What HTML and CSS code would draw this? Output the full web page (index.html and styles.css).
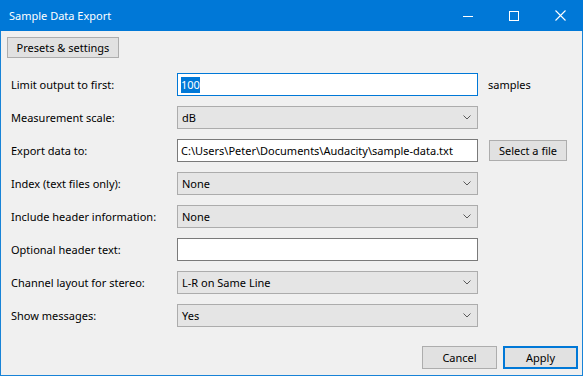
FILE: index.html
```html
<!DOCTYPE html>
<html>
<head>
<meta charset="utf-8">
<link rel="stylesheet" href="styles.css">
</head>
<body>
<div class="window">
  <div class="titlebar">
    <span class="title">Sample Data Export</span>
    <div class="controls">
      <div class="ctl"><svg width="10" height="10" viewBox="0 0 10 10"><path d="M0 5.5H10" stroke="#fff" stroke-width="1"/></svg></div>
      <div class="ctl"><svg width="10" height="10" viewBox="0 0 10 10"><rect x="0.5" y="0.5" width="9" height="9" fill="none" stroke="#fff" stroke-width="1"/></svg></div>
      <div class="ctl"><svg width="11" height="11" viewBox="0 0 11 11"><path d="M0.5 0.5L10.5 10.5M10.5 0.5L0.5 10.5" stroke="#fff" stroke-width="1.1"/></svg></div>
    </div>
  </div>
  <div class="content">
    <div class="toprow"><div class="btn presets">Presets &amp; settings</div></div>
    <div class="form">
      <div class="label">Limit output to first:</div>
      <div class="input focused"><span class="sel">100</span></div>
      <div class="extra text">samples</div>

      <div class="label">Measurement scale:</div>
      <div class="combo"><span>dB</span><svg class="chev" width="8" height="5" viewBox="0 0 8 5"><path d="M0.5 0.5L4 4L7.5 0.5" fill="none" stroke="#5a5a5a" stroke-width="1"/></svg></div>
      <div class="extra"></div>

      <div class="label">Export data to:</div>
      <div class="input">C:\Users\Peter\Documents\Audacity\sample-data.txt</div>
      <div class="extra"><div class="btn file">Select a file</div></div>

      <div class="label">Index (text files only):</div>
      <div class="combo"><span>None</span><svg class="chev" width="8" height="5" viewBox="0 0 8 5"><path d="M0.5 0.5L4 4L7.5 0.5" fill="none" stroke="#5a5a5a" stroke-width="1"/></svg></div>
      <div class="extra"></div>

      <div class="label">Include header information:</div>
      <div class="combo"><span>None</span><svg class="chev" width="8" height="5" viewBox="0 0 8 5"><path d="M0.5 0.5L4 4L7.5 0.5" fill="none" stroke="#5a5a5a" stroke-width="1"/></svg></div>
      <div class="extra"></div>

      <div class="label">Optional header text:</div>
      <div class="input"></div>
      <div class="extra"></div>

      <div class="label">Channel layout for stereo:</div>
      <div class="combo"><span>L-R on Same Line</span><svg class="chev" width="8" height="5" viewBox="0 0 8 5"><path d="M0.5 0.5L4 4L7.5 0.5" fill="none" stroke="#5a5a5a" stroke-width="1"/></svg></div>
      <div class="extra"></div>

      <div class="label">Show messages:</div>
      <div class="combo"><span>Yes</span><svg class="chev" width="8" height="5" viewBox="0 0 8 5"><path d="M0.5 0.5L4 4L7.5 0.5" fill="none" stroke="#5a5a5a" stroke-width="1"/></svg></div>
      <div class="extra"></div>
    </div>
    <div class="footer">
      <div class="btn action">Cancel</div>
      <div class="btn action default">Apply</div>
    </div>
  </div>
</div>
</body>
</html>
```

FILE: styles.css
```css
* { box-sizing: border-box; }
html, body { margin: 0; padding: 0; }
body {
  width: 583px;
  height: 376px;
  font-family: "Noto Sans", "DejaVu Sans", sans-serif;
  font-size: 11px;
  color: #000;
  background: #f0f0f0;
}
.window {
  width: 583px;
  height: 376px;
  border: 1px solid #1883d7;
  border-top: none;
  background: #f0f0f0;
  display: flex;
  flex-direction: column;
}
.titlebar {
  height: 31px;
  margin: 0 -1px;
  background: #0078d7;
  display: flex;
  align-items: center;
  justify-content: space-between;
  flex-shrink: 0;
}
.title {
  color: #fff;
  padding-left: 9px;
  font-size: 11px;
  line-height: 1;
  margin-top: -1px;
}
.controls { display: flex; height: 100%; }
.ctl {
  width: 46px;
  height: 100%;
  display: flex;
  align-items: center;
  justify-content: center;
}
.content {
  flex: 1;
  display: flex;
  flex-direction: column;
  padding: 6px 4px 0 6px;
}
.toprow { display: flex; }
.btn {
  background: #e1e1e1;
  border: 1px solid #adadad;
  display: flex;
  align-items: center;
  justify-content: center;
  white-space: nowrap;
}
.presets {
  width: 112px;
  height: 21px;
}
.form {
  margin-top: 15px;
  padding-left: 4px;
  display: grid;
  grid-template-columns: 166px 301px auto;
  grid-auto-rows: 23px;
  row-gap: 10px;
  align-items: center;
}
.label { white-space: nowrap; }
.input {
  height: 23px;
  background: #fff;
  border: 1px solid #7a7a7a;
  padding-left: 3px;
  display: flex;
  align-items: center;
  white-space: nowrap;
  overflow: hidden;
}
.input.focused { border-color: #0078d7; }
.sel {
  background: #0078d7;
  color: #fff;
  line-height: 16px;
}
.combo {
  height: 23px;
  background: #e5e5e5;
  border: 1px solid #acacac;
  padding: 0 6px 0 4px;
  display: flex;
  align-items: center;
  justify-content: space-between;
}
.chev { margin-right: 0; }
.extra { margin-left: 10px; display: flex; align-items: center; }
.file {
  width: 78px;
  height: 21px;
  margin-left: 1px;
}
.footer {
  margin-top: 19px;
  display: flex;
  justify-content: flex-end;
  gap: 6px;
}
.action {
  width: 75px;
  height: 23px;
}
.default {
  border: 1px solid #0078d7;
  box-shadow: inset 0 0 0 1px #0078d7;
}
```
